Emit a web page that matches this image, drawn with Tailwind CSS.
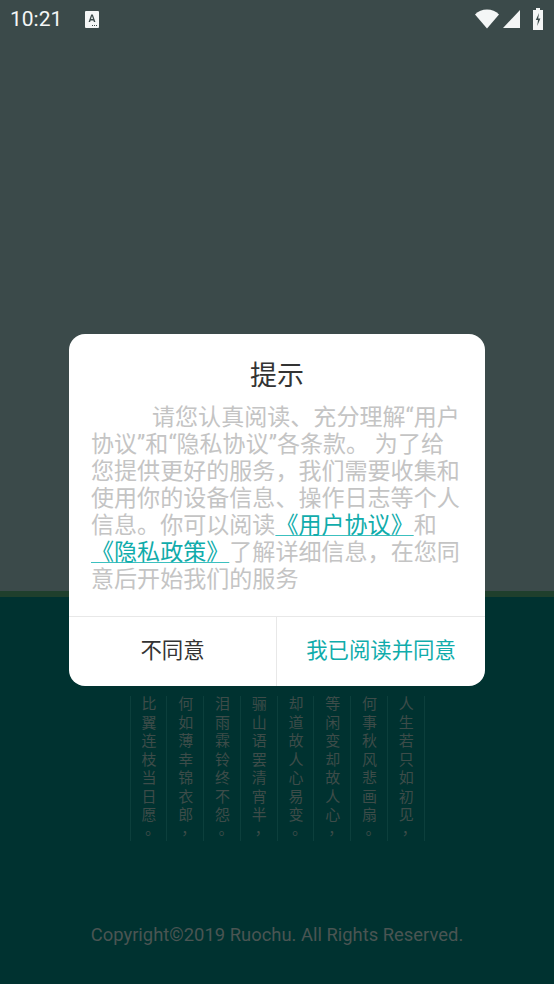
<!DOCTYPE html>
<html lang="zh-CN">
<head>
    <meta charset="UTF-8">
    <meta name="viewport" content="width=device-width, initial-scale=1.0">
    <title>提示</title>
    <script src="https://cdn.jsdelivr.net/npm/@tailwindcss/browser@4"></script>
</head>
<body class="relative h-[984px] w-[554px] overflow-hidden flex flex-col bg-[#003230] font-['Roboto','Noto_Sans_CJK_SC',sans-serif]">
    <!-- upper part with status bar -->
    <div class="h-[591px] shrink-0 bg-[#3b4a4a]">
        <div class="flex h-[38px] items-center pl-[10px] pr-[11px]">
            <span class="text-[21px] leading-none text-[#f4f6f6]">10:21</span>
            <svg class="ml-[23px]" width="14" height="17" viewBox="0 0 14 17">
                <rect x="0" y="0" width="14" height="17" rx="1" fill="#f4f6f6"/>
                <path d="M3.600 11 6.200 3.500h1.600l2.600 7.500H8.900l-.5-1.600H5.600l-.5 1.600zM6 8h2L7 5z" fill="#3b4a4a"/>
                <path d="M7 14h1v1H7zm2 0h1v1H9zm2 0h1v1h-1z" fill="#3b4a4a"/>
            </svg>
            <div class="ml-auto flex items-center">
                <svg width="24" height="20" viewBox="0 0 24 20"><path d="M0 5.500C3.200 2.200 7.300.5 12 .5s8.800 1.700 12 5L12 19.500z" fill="#f4f6f6"/></svg>
                <svg class="ml-[4px]" width="17" height="18" viewBox="0 0 17 18"><path d="M17 0v18H0z" fill="#f4f6f6"/></svg>
                <svg class="ml-[13px]" width="10" height="22" viewBox="0 0 10 22">
                    <path d="M3 0h4v2h3v20H0V2h3z" fill="#f4f6f6"/>
                    <path d="M6 5 2.800 12h2.200L4.200 18 7.400 10.500H5.200z" fill="#3b4a4a"/>
                </svg>
            </div>
        </div>
    </div>
    <div class="h-[6px] shrink-0 bg-[#1f3f2c]"></div>

    <!-- poem and footer -->
    <div class="flex flex-1 flex-col items-center">
        <div class="mt-[99px] flex h-[145px] border-r border-[#0c3f3c] text-[15px] leading-none text-[#3d4c49]">
            <div class="flex w-[36.750px] justify-center border-l border-[#0c3f3c] pr-[2px]"><p class="whitespace-nowrap tracking-[3.550px] [writing-mode:vertical-rl]">比翼连枝当日愿<span lang="zh-TW" class="font-['Noto_Sans_CJK_TC']">。</span></p></div>
            <div class="flex w-[36.750px] justify-center border-l border-[#0c3f3c] pr-[2px]"><p class="whitespace-nowrap tracking-[3.550px] [writing-mode:vertical-rl]">何如薄幸锦衣郎<span lang="zh-TW" class="font-['Noto_Sans_CJK_TC']">，</span></p></div>
            <div class="flex w-[36.750px] justify-center border-l border-[#0c3f3c] pr-[2px]"><p class="whitespace-nowrap tracking-[3.550px] [writing-mode:vertical-rl]">泪雨霖铃终不怨<span lang="zh-TW" class="font-['Noto_Sans_CJK_TC']">。</span></p></div>
            <div class="flex w-[36.750px] justify-center border-l border-[#0c3f3c] pr-[2px]"><p class="whitespace-nowrap tracking-[3.550px] [writing-mode:vertical-rl]">骊山语罢清宵半<span lang="zh-TW" class="font-['Noto_Sans_CJK_TC']">，</span></p></div>
            <div class="flex w-[36.750px] justify-center border-l border-[#0c3f3c] pr-[2px]"><p class="whitespace-nowrap tracking-[3.550px] [writing-mode:vertical-rl]">却道故人心易变<span lang="zh-TW" class="font-['Noto_Sans_CJK_TC']">。</span></p></div>
            <div class="flex w-[36.750px] justify-center border-l border-[#0c3f3c] pr-[2px]"><p class="whitespace-nowrap tracking-[3.550px] [writing-mode:vertical-rl]">等闲变却故人心<span lang="zh-TW" class="font-['Noto_Sans_CJK_TC']">，</span></p></div>
            <div class="flex w-[36.750px] justify-center border-l border-[#0c3f3c] pr-[2px]"><p class="whitespace-nowrap tracking-[3.550px] [writing-mode:vertical-rl]">何事秋风悲画扇<span lang="zh-TW" class="font-['Noto_Sans_CJK_TC']">。</span></p></div>
            <div class="flex w-[36.750px] justify-center border-l border-[#0c3f3c] pr-[2px]"><p class="whitespace-nowrap tracking-[3.550px] [writing-mode:vertical-rl]">人生若只如初见<span lang="zh-TW" class="font-['Noto_Sans_CJK_TC']">，</span></p></div>
        </div>
        <p class="mt-[83px] text-[18.400px] leading-[21px] text-[#4a5553]">Copyright©2019 Ruochu. All Rights Reserved.</p>
    </div>

    <!-- dialog -->
    <div class="absolute left-[69px] top-[334px] flex h-[352px] w-[416px] flex-col rounded-[16px] bg-white">
        <h2 class="pt-[24px] text-center text-[27px] font-normal leading-[36px] text-[#333333]">提示</h2>
        <div class="mt-[10px] px-[22px] text-[23.050px] leading-[27px] text-[#c4c4c4]">
            <p class="whitespace-nowrap indent-[61px]">请您认真阅读、充分理解“用户</p>
            <p class="whitespace-nowrap">协议”和“隐私协议”各条款。 为了给</p>
            <p class="whitespace-nowrap">您提供更好的服务，我们需要收集和</p>
            <p class="whitespace-nowrap">使用你的设备信息、操作日志等个人</p>
            <p class="whitespace-nowrap">信息。你可以阅读<a class="text-[#10acab] underline decoration-[#3cc0bf] decoration-1 underline-offset-[2px]">《用户协议》</a>和</p>
            <p class="whitespace-nowrap"><a class="text-[#10acab] underline decoration-[#3cc0bf] decoration-1 underline-offset-[2px]">《隐私政策》</a>了解详细信息，在您同</p>
            <p class="whitespace-nowrap">意后开始我们的服务</p>
        </div>
        <div class="mt-auto flex h-[70px] border-t border-[#e8e8e8] text-[21.400px]">
            <div class="flex w-[208px] items-center justify-center border-r border-[#e8e8e8] text-[#333333]">不同意</div>
            <div class="flex flex-1 items-center justify-center text-[#10acab]">我已阅读并同意</div>
        </div>
    </div>
</body>
</html>
